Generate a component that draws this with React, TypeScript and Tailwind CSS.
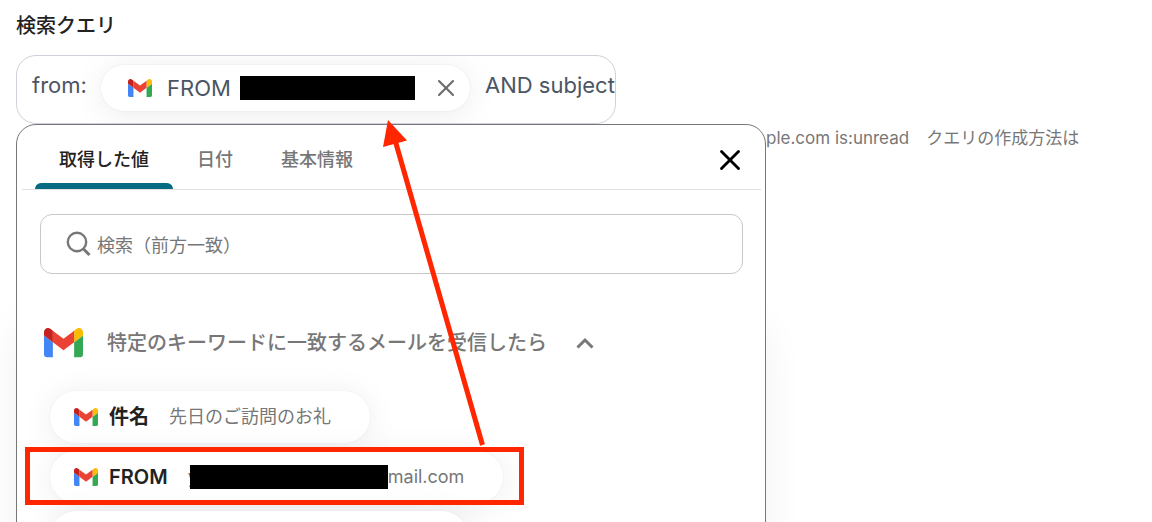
import React, { useState } from 'react';
import { X } from 'lucide-react';

const tabs = ['取得した値', '日付', '基本情報'];

function GmailIcon({ className }: { className: string }) {
  return (
    <svg viewBox="52 42 88 66" className={className} aria-hidden="true">
      <path fill="#4285f4" d="M58 108h14V74L52 59v43c0 3.32 2.69 6 6 6" />
      <path fill="#34a853" d="M120 108h14c3.32 0 6-2.69 6-6V59l-20 15" />
      <path fill="#fbbc04" d="M120 48v26l20-15v-8c0-7.42-8.47-11.65-14.4-7.2" />
      <path fill="#ea4335" d="M72 74V48l24 18 24-18v26L96 92" />
      <path fill="#c5221f" d="M52 51v8l20 15V48l-5.6-4.2c-5.94-4.45-14.4-.22-14.4 7.2" />
    </svg>
  );
}

function ValuePill({ name, children }: { name: string; children: React.ReactNode }) {
  return (
    <button className="flex h-[52px] items-center rounded-full bg-white px-6 shadow-[0_4px_32px_rgba(0,0,0,0.08),0_0_2px_rgba(0,0,0,0.06)]">
      <GmailIcon className="w-6" />
      <span className="ml-[11px] text-xl font-semibold text-[#222]">{name}</span>
      <span className="mr-[15px] ml-5 flex items-center text-lg text-[#777]">{children}</span>
    </button>
  );
}

function QueryField() {
  return (
    <div className="flex h-[69px] max-w-[600px] items-start overflow-hidden rounded-[20px] border border-[#ced1d9] py-[9px] pl-[15px] text-[22px] text-[#4b5563]">
      <input
        aria-label="検索クエリ（前半）"
        defaultValue="from:"
        className="h-10 w-[69px] shrink-0 bg-transparent outline-none"
      />
      <div className="flex h-[46px] shrink-0 items-center rounded-full bg-white pr-[10px] pl-[27px] shadow-[0_4px_32px_rgba(0,0,0,0.08),0_0_2px_rgba(0,0,0,0.08)]">
        <GmailIcon className="w-6" />
        <span className="ml-[15px] w-[73px]">FROM</span>
        <span className="h-6 w-[175px] bg-black" />
        <button aria-label="削除" className="ml-[17px] text-[#6b6b6b]">
          <X size={28} strokeWidth={1.8} />
        </button>
      </div>
      <input
        aria-label="検索クエリ（後半）"
        defaultValue="AND subject"
        className="ml-[15px] h-10 w-40 shrink-0 bg-transparent outline-none"
      />
    </div>
  );
}

function ValuePicker() {
  const [activeTab, setActiveTab] = useState(0);
  const [open, setOpen] = useState(true);

  return (
    <section className="w-[750px] shrink-0 rounded-[20px] border border-[#777] bg-white pr-1 pb-8 pl-[5px] shadow-[0_200px_40px_rgba(0,0,0,0.06)]">
      <div className="flex h-[65px] items-center justify-between border-b border-[#e2e2e2] pr-[14px] pl-[13px]">
        <div role="tablist" className="flex h-full">
          {tabs.map((tab, i) => (
            <button
              key={tab}
              role="tab"
              aria-selected={i === activeTab}
              onClick={() => setActiveTab(i)}
              className={`relative h-full px-6 pt-[6px] text-lg font-medium ${i === activeTab ? 'text-[#222]' : 'text-[#777]'}`}
            >
              {tab}
              {i === activeTab && <span className="absolute inset-x-0 bottom-0 h-[6px] rounded-t-md bg-[#046b82]" />}
            </button>
          ))}
        </div>
        <button aria-label="閉じる" className="pt-[6px] text-black">
          <X size={34} strokeWidth={2} />
        </button>
      </div>

      <div className="px-[18px] pt-6">
        <label className="flex h-[60px] items-center rounded-xl border border-[#c8c8c8] px-6">
          <svg viewBox="0 0 26 26" className="w-[26px] text-[#777]" fill="none" stroke="currentColor" aria-hidden="true">
            <circle cx="12" cy="11" r="9.2" strokeWidth="2.4" />
            <path d="M18.500 18l6 6" strokeWidth="3" />
          </svg>
          <input
            type="text"
            aria-label="検索"
            placeholder="検索（前方一致）"
            className="ml-[6px] flex-1 pt-[3px] text-lg outline-none placeholder:text-[#777]"
          />
        </label>

        <button onClick={() => setOpen(!open)} className="mt-[53px] flex h-8 items-center pl-1">
          <GmailIcon className="w-[39px]" />
          <span className="ml-6 text-xl font-medium text-[#777]">特定のキーワードに一致するメールを受信したら</span>
          <svg viewBox="0 0 18 12" className="ml-[29px] w-[18px] text-[#777]" fill="none" stroke="currentColor" strokeWidth="3" aria-hidden="true">
            <path d="M1.500 10.500L9 3l7.500 7.500" />
          </svg>
        </button>

        {open && (
          <div className="mt-8 flex flex-col items-start gap-2 pl-[10px]">
            <ValuePill name="件名">先日のご訪問のお礼</ValuePill>
            <ValuePill name="FROM">
              y
              <span className="-ml-2 h-6 w-[198px] bg-black" />
              mail.com
            </ValuePill>
            <div className="h-[52px] w-[418px] rounded-full bg-white shadow-[0_4px_32px_rgba(0,0,0,0.08),0_0_2px_rgba(0,0,0,0.06)]" />
          </div>
        )}
      </div>
    </section>
  );
}

// Red frame and arrow drawn over the form
function Callout() {
  return (
    <svg width="540" height="522" className="pointer-events-none absolute top-0 left-0" aria-hidden="true">
      <rect x="27.500" y="449.500" width="494" height="53" fill="none" stroke="#ff2600" strokeWidth="5" />
      <path d="M482.500 445L395 140" stroke="#ff2600" strokeWidth="5" />
      <path d="M388 120l19 20.500-24 6.500z" fill="#ff2600" />
    </svg>
  );
}

function App() {
  return (
    <div className="relative h-screen overflow-hidden bg-white px-4 pt-[10px] font-['Inter','Noto_Sans_CJK_JP',sans-serif]">
      <h2 className="mb-[13px] text-xl leading-8 font-medium text-[#222]">検索クエリ</h2>
      <QueryField />
      <div className="flex items-start">
        <ValuePicker />
        <p className="pt-[2px] text-[17px] whitespace-nowrap text-[#777]">ple.com is:unread　クエリの作成方法は</p>
      </div>
      <Callout />
    </div>
  );
}

export default App;
